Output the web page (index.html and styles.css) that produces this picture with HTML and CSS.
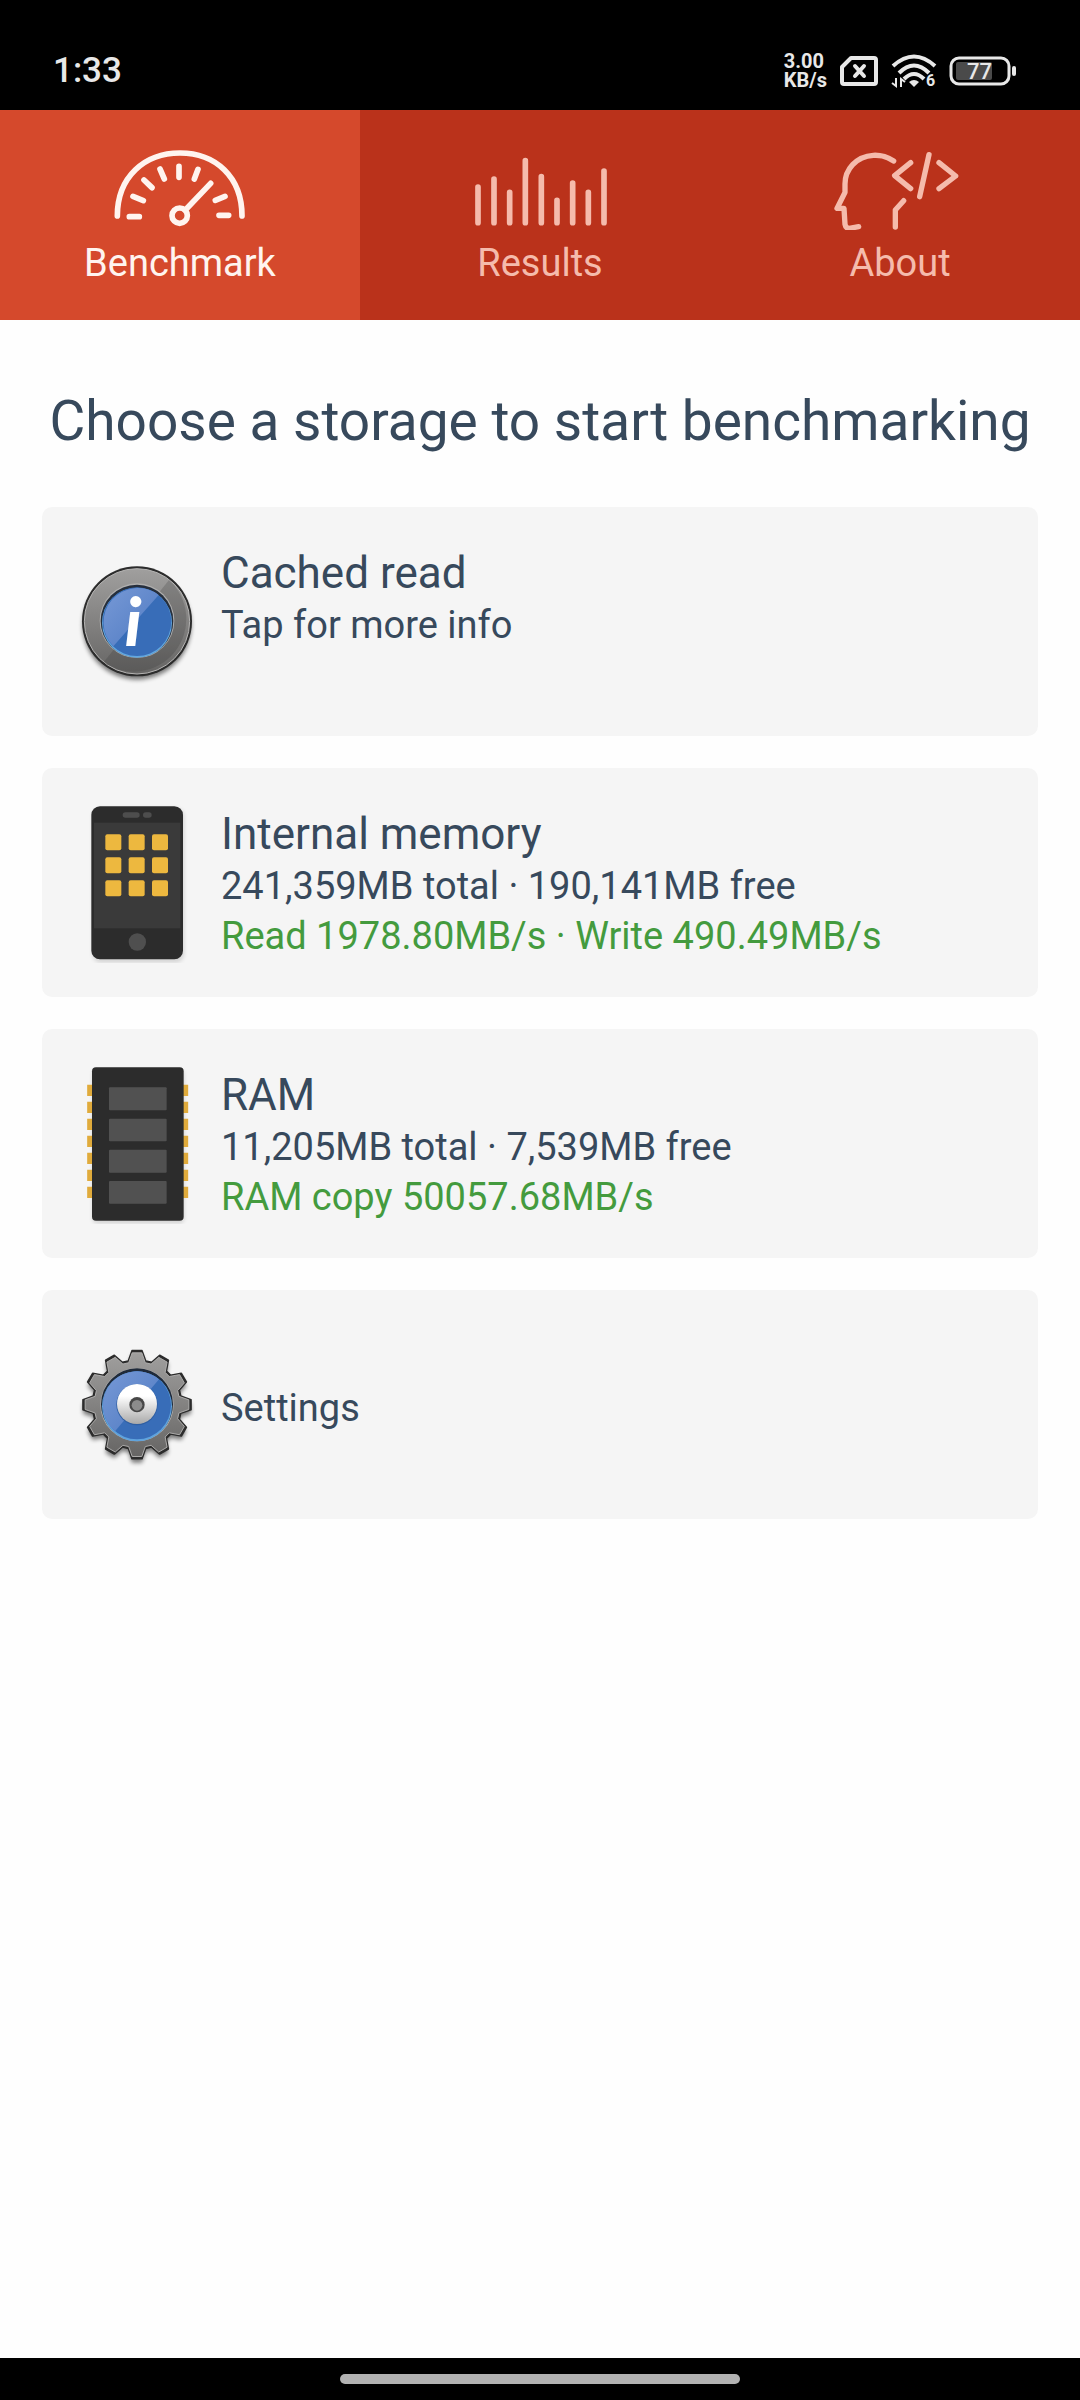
FILE: index.html
```
<!DOCTYPE html>
<html lang="en">
<head>
    <meta charset="UTF-8">
    <meta name="viewport" content="width=device-width, initial-scale=1.0">
    <title>Storage benchmark</title>
    <link rel="stylesheet" href="styles.css">
</head>
<body>
    <header class="status-bar">
        <span class="clock">1:33</span>
        <div class="status-icons">
            <div class="net-speed">
                <span>3.00</span>
                <span>KB/s</span>
            </div>
            <!-- no SIM -->
            <svg width="40" height="32" viewBox="0 0 40 32" fill="none" stroke="#e8e8e8" stroke-width="4" stroke-linejoin="round" stroke-linecap="round">
                <path d="M12 3H35Q37 3 37 5V27Q37 29 35 29H5Q3 29 3 27V12Z"/>
                <path d="M16 11L25 21M25 11L16 21"/>
            </svg>
            <!-- wifi -->
            <svg width="46" height="36" viewBox="0 0 46 36" fill="none" stroke="#e8e8e8" stroke-width="4">
                <path d="M2 13Q23 -6 44 13"/>
                <path d="M8 20Q23 5 38 20"/>
                <path d="M13 26Q23 16 33 26"/>
                <path d="M18 29Q23 25 28 29L23 34Z" fill="#e8e8e8" stroke="none"/>
                <path d="M5 25V33L1 30M10 34V26L14 29" stroke-width="2"/>
                <text class="wifi-gen" x="35" y="33">6</text>
            </svg>
            <!-- battery -->
            <svg width="67" height="30" viewBox="0 0 67 30">
                <rect x="2" y="2" width="58" height="26" rx="8" fill="none" stroke="#e8e8e8" stroke-width="3"/>
                <rect x="7" y="6" width="36" height="18" rx="2" fill="#4a4a4a"/>
                <rect x="63" y="10" width="4" height="10" rx="2" fill="#e8e8e8"/>
                <text class="battery-level" x="18" y="23">77</text>
            </svg>
        </div>
    </header>

    <nav class="tabs">
        <a class="tab active" href="#benchmark">
            <svg class="tab-icon" viewBox="150 108 420 252" fill="none" stroke="currentColor" stroke-width="17" stroke-linecap="round">
                <path d="M172 318C172 200 254 129 360 129S546 200 546 318"/>
                <path d="M208 320H238M219 259L250 272M252 210L276 233M300 177L313 207M357 169V202M414 178L403 207M466 271L495 259M477 316H506"/>
                <circle cx="359" cy="317" r="23"/>
                <path d="M376 300L452 220"/>
            </svg>
            <span>Benchmark</span>
        </a>
        <a class="tab" href="#results">
            <svg class="tab-icon" viewBox="150 108 420 252" fill="none" stroke="currentColor" stroke-width="17" stroke-linecap="round">
                <path d="M174 231V338M222 207V338M269 247V338M316 152V338M364 200V338M411 271V338M458 219V338M505 247V338M552 183V338"/>
            </svg>
            <span>Results</span>
        </a>
        <a class="tab" href="#about">
            <svg class="tab-icon" viewBox="150 108 420 252" fill="none" stroke="currentColor" stroke-width="16" stroke-linecap="round" stroke-linejoin="round">
                <path d="M341 153C314 136 298 135 280 136C228 139 195 179 195 222V247L171 295H192L195 343Q197 355 208 355L236 350"/>
                <path d="M371 272L346 300V351"/>
                <path d="M392 158L344 197L392 236M447 134L419 260M477 158L527 198L477 236"/>
            </svg>
            <span>About</span>
        </a>
    </nav>

    <main class="content">
        <h1>Choose a storage to start benchmarking</h1>

        <button class="card" type="button">
            <svg class="card-icon" viewBox="51 6 360 480">
                <defs>
                    <linearGradient id="ring" x1="0" y1="0" x2="0" y2="1">
                        <stop offset="0" stop-color="#a09f9e"/>
                        <stop offset="1" stop-color="#666564"/>
                    </linearGradient>
                    <linearGradient id="blue" x1="0" y1="0" x2="1" y2="1">
                        <stop offset="0" stop-color="#7799d6"/>
                        <stop offset="1" stop-color="#4f7ac2"/>
                    </linearGradient>
                    <filter id="soft" x="-20%" y="-20%" width="140%" height="140%">
                        <feGaussianBlur stdDeviation="7"/>
                    </filter>
                </defs>
                <circle cx="231" cy="256" r="163" fill="#000" opacity="0.5" filter="url(#soft)"/>
                <circle cx="231" cy="244" r="165" fill="#2c2c2c"/>
                <circle cx="231" cy="244" r="158" fill="url(#ring)" stroke="#b5b4b3" stroke-width="3"/>
                <path d="M131 367A158 158 0 0 0 327 120Z" fill="#333" opacity="0.22"/>
                <circle cx="231" cy="242" r="112" fill="#b0afae"/>
                <circle cx="231" cy="243" r="109" fill="#262f3d"/>
                <circle cx="231" cy="248" r="105" fill="#62a8e0"/>
                <circle cx="231" cy="245" r="103" fill="#386db8"/>
                <path d="M160 319A103 103 0 0 1 296 165Z" fill="url(#blue)"/>
                <text class="info-mark" x="194" y="319">i</text>
            </svg>
            <span class="card-text">
                <span class="card-title">Cached read</span>
                <span class="card-line">Tap for more info</span>
            </span>
        </button>

        <button class="card" type="button">
            <svg class="card-icon" viewBox="21 38 360 480">
                <rect x="68" y="54" width="274" height="462" rx="24" fill="#000" opacity="0.14" filter="url(#soft)"/>
                <rect x="64" y="48" width="275" height="459" rx="26" fill="#2c2c2c"/>
                <rect x="72" y="97" width="259" height="317" fill="#3a3a3a"/>
                <rect x="158" y="66" width="51" height="16" rx="8" fill="#4d4d4d"/>
                <rect x="219" y="66" width="26" height="16" rx="8" fill="#4d4d4d"/>
                <g fill="#edb83f">
                    <rect x="106" y="132" width="48" height="48" rx="6"/>
                    <rect x="176" y="132" width="48" height="48" rx="6"/>
                    <rect x="246" y="132" width="48" height="48" rx="6"/>
                    <rect x="106" y="201" width="48" height="48" rx="6"/>
                    <rect x="176" y="201" width="48" height="48" rx="6"/>
                    <rect x="246" y="201" width="48" height="48" rx="6"/>
                    <rect x="106" y="270" width="48" height="48" rx="6"/>
                    <rect x="176" y="270" width="48" height="48" rx="6"/>
                    <rect x="246" y="270" width="48" height="48" rx="6"/>
                </g>
                <circle cx="202" cy="455" r="26" fill="#4f4f4f"/>
            </svg>
            <span class="card-text">
                <span class="card-title">Internal memory</span>
                <span class="card-line">241,359MB total · 190,141MB free</span>
                <span class="card-line speed">Read 1978.80MB/s · Write 490.49MB/s</span>
            </span>
        </button>

        <button class="card" type="button">
            <svg class="card-icon" viewBox="21 40 360 480">
                <rect x="68" y="58" width="274" height="460" rx="14" fill="#000" opacity="0.14" filter="url(#soft)"/>
                <path d="M60 102V442M346 102V442" stroke="#e0ab3c" stroke-width="17" stroke-dasharray="34 17" fill="none"/>
                <rect x="66" y="50" width="275" height="460" rx="12" fill="#2c2c2c"/>
                <g fill="#515151">
                    <rect x="117" y="110" width="173" height="69" rx="3"/>
                    <rect x="117" y="204" width="173" height="68" rx="3"/>
                    <rect x="117" y="297" width="173" height="69" rx="3"/>
                    <rect x="117" y="391" width="173" height="68" rx="3"/>
                </g>
            </svg>
            <span class="card-text">
                <span class="card-title">RAM</span>
                <span class="card-line">11,205MB total · 7,539MB free</span>
                <span class="card-line speed">RAM copy 50057.68MB/s</span>
            </span>
        </button>

        <button class="card" type="button">
            <svg class="card-icon" viewBox="51 13 360 480">
                <defs>
                    <linearGradient id="disc" x1="0" y1="0" x2="0" y2="1">
                        <stop offset="0.3" stop-color="#ffffff"/>
                        <stop offset="1" stop-color="#a9a9a9"/>
                    </linearGradient>
                    <path id="gear" d="M-26-131L-15-162H15L26-131L44-127L68-148L94-133L88-101L101-88L133-94L148-68L127-44L131-26L162-15V15L131 26L127 44L148 68L133 94L101 88L88 101L94 133L68 148L44 127L26 131L15 162H-15L-26 131L-44 127L-68 148L-94 133L-88 101L-101 88L-133 94L-148 68L-127 44L-131 26L-162 15V-15L-131-26L-127-44L-148-68L-133-94L-101-88L-88-101L-94-133L-68-148L-44-127Z"/>
                </defs>
                <g transform="translate(231 252)">
                    <use href="#gear" y="12" opacity="0.5" filter="url(#soft)"/>
                    <use href="#gear" fill="#2c2c2c" stroke="#2c2c2c" stroke-width="5" stroke-linejoin="round"/>
                    <use href="#gear" fill="url(#ring)" stroke="#b0afae" stroke-width="3" transform="scale(0.96)"/>
                    <circle r="110" cy="0" fill="#b0afae"/>
                    <circle r="108" cy="-1" fill="#1f2a3a"/>
                    <circle r="105" cy="5" fill="#5fa3dd"/>
                    <circle r="102" cy="2" fill="#386db8"/>
                    <path d="M-66 80A102 102 0 0 1 66 -76Z" fill="url(#blue)"/>
                    <circle r="62" fill="#2f5fa3"/>
                    <circle r="60" cy="-2" fill="url(#disc)"/>
                    <circle r="23" fill="#474747"/>
                    <circle r="16" cy="2" fill="#8c8c8c"/>
                </g>
            </svg>
            <span class="card-text centered">
                <span class="card-line">Settings</span>
            </span>
        </button>
    </main>

    <footer class="nav-bar">
        <div class="home-pill"></div>
    </footer>
</body>
</html>
```
FILE: styles.css
```
* {
    box-sizing: border-box;
}
body {
    margin: 0;
    min-height: 100vh;
    display: flex;
    flex-direction: column;
    font-family: Roboto, "Noto Sans", sans-serif;
    background-color: #fefefe;
    color: #37495c;
}

/* status bar */
.status-bar {
    display: flex;
    justify-content: space-between;
    align-items: center;
    height: 110px;
    padding: 32px 64px 0 53px;
    background-color: #000;
    color: #e8e8e8;
}
.clock {
    font-size: 35px;
    line-height: 40px;
    font-weight: 500;
}
.status-icons {
    display: flex;
    align-items: center;
    gap: 12px;
}
.net-speed {
    display: flex;
    flex-direction: column;
    font-size: 20px;
    line-height: 19px;
    font-weight: 700;
}
.wifi-gen {
    font-size: 16px;
    font-weight: 700;
    fill: #e8e8e8;
    stroke: none;
}
.battery-level {
    font-size: 22px;
    font-weight: 500;
    fill: #e8e8e8;
}

/* tabs */
.tabs {
    display: grid;
    grid-template-columns: repeat(3, 1fr);
    background-color: #ba321b;
}
.tab {
    display: flex;
    flex-direction: column;
    align-items: center;
    gap: 11px;
    padding: 36px 0 35px;
    font-size: 38px;
    line-height: 44px;
    color: #f5bbac;
    text-decoration: none;
}
.tab.active {
    background-color: #d5492c;
    color: #fff4ef;
}
.tab-icon {
    width: 140px;
    height: 84px;
}

/* content */
.content {
    flex: 1;
    display: flex;
    flex-direction: column;
    gap: 32px;
    padding: 69px 42px 32px;
}
h1 {
    margin: 0 -20px 22px;
    font-size: 55px;
    line-height: 64px;
    font-weight: 400;
    text-align: center;
}
.card {
    display: flex;
    align-items: center;
    gap: 24px;
    min-height: 229px;
    padding: 0 35px;
    border: none;
    border-radius: 10px;
    background-color: #f5f5f5;
    color: inherit;
    font-family: inherit;
    text-align: left;
    cursor: pointer;
}
.card-icon {
    flex: none;
    width: 120px;
    height: 160px;
}
.info-mark {
    font-family: Lato, sans-serif;
    font-size: 200px;
    font-weight: 900;
    font-style: italic;
    fill: #fff;
}
.card-text {
    display: flex;
    flex-direction: column;
    align-self: flex-start;
    padding-top: 39px;
}
.card-text.centered {
    align-self: center;
    padding-top: 6px;
}
.card-title {
    font-size: 44px;
    line-height: 54px;
}
.card-line {
    font-size: 38px;
    line-height: 50px;
}
.speed {
    color: #449b3e;
}

/* gesture bar */
.nav-bar {
    display: flex;
    justify-content: center;
    padding: 16px 0;
    background-color: #000;
}
.home-pill {
    width: 37%;
    height: 10px;
    border-radius: 5px;
    background-color: #b2b2b2;
}
```
